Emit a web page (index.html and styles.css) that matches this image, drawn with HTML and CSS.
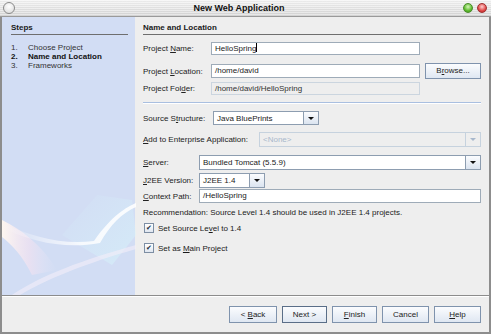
FILE: index.html
```html
<html>
  <head>
    <title>New Web Application</title>
    <meta charset="UTF-8" />
    <link rel="stylesheet" href="styles.css">
  </head>
  <body>
    <div id="window">
      <div id="titlebar">
        <span class="knob knob-menu"></span>
        <span id="title">New Web Application</span>
        <span class="knob knob-green"></span>
        <span class="knob knob-red"></span>
      </div>

      <div id="main">
        <div id="steps">
          <div class="heading">Steps</div>
          <ol>
            <li><span class="num">1.</span>Choose Project</li>
            <li class="current"><span class="num">2.</span>Name and Location</li>
            <li><span class="num">3.</span>Frameworks</li>
          </ol>
          <svg id="swoosh" width="134" height="120" viewBox="0 0 134 120">
            <defs>
              <linearGradient id="g1" x1="0" y1="0" x2="1" y2="0">
                <stop offset="0" stop-color="#fff8f0" stop-opacity="0.95" />
                <stop offset="0.5" stop-color="#f6e2f0" stop-opacity="0.6" />
                <stop offset="1" stop-color="#e8e8f8" stop-opacity="0" />
              </linearGradient>
              <linearGradient id="g2" x1="0" y1="0" x2="1" y2="0">
                <stop offset="0" stop-color="#ffffff" stop-opacity="0" />
                <stop offset="0.6" stop-color="#ffffff" stop-opacity="0.8" />
                <stop offset="1" stop-color="#ffffff" stop-opacity="0.9" />
              </linearGradient>
              <linearGradient id="g3" x1="0" y1="0" x2="1" y2="1">
                <stop offset="0" stop-color="#d8f4fb" stop-opacity="0" />
                <stop offset="1" stop-color="#d6f6fb" stop-opacity="0.9" />
              </linearGradient>
            </defs>
            <path d="M60 60 L95 20 L130 25 L134 60 L110 90 Z" fill="url(#g3)" opacity="0.6" />
            <path d="M0 45 C20 55 40 70 55 95 L30 100 C20 80 10 70 0 62 Z" fill="url(#g1)" />
            <path d="M0 48 C30 62 60 70 92 66 C110 40 125 32 134 28 L134 32 C120 38 108 50 98 68 C65 74 30 68 0 52 Z" fill="url(#g2)" />
            <path d="M10 120 C40 100 80 85 134 70 L134 74 C85 88 45 104 18 120 Z" fill="#f4eef8" opacity="0.6" />
          </svg>
        </div>

        <div id="panel">
          <div class="heading">Name and Location</div>

          <div class="row r-name">
            <label class="lbl w68">Project <u>N</u>ame:</label>
            <div class="field wide">HelloSpring<span class="caret"></span></div>
          </div>
          <div class="row r-loc">
            <label class="lbl w68">Project <u>L</u>ocation:</label>
            <div class="field wide">/home/david</div>
            <div class="btn browse">B<u>r</u>owse...</div>
          </div>
          <div class="row r-folder">
            <label class="lbl w68">Project Fol<u>d</u>er:</label>
            <div class="field wide disabled">/home/david/HelloSpring</div>
          </div>

          <div class="separator"></div>

          <div class="row r-src">
            <label class="lbl w70">Source S<u>t</u>ructure:</label>
            <div class="combo src">
              <span class="value">Java BluePrints</span><span class="arrow"></span>
            </div>
          </div>
          <div class="row r-ent">
            <label class="lbl w116"><u>A</u>dd to Enterprise Application:</label>
            <div class="combo grow disabled">
              <span class="value">&lt;None&gt;</span><span class="arrow"></span>
            </div>
          </div>
          <div class="row r-server">
            <label class="lbl w56"><u>S</u>erver:</label>
            <div class="combo grow">
              <span class="value">Bundled Tomcat (5.5.9)</span><span class="arrow"></span>
            </div>
          </div>
          <div class="row r-j2ee">
            <label class="lbl w56"><u>J</u>2EE Version:</label>
            <div class="combo j2ee">
              <span class="value">J2EE 1.4</span><span class="arrow"></span>
            </div>
          </div>
          <div class="row r-ctx">
            <label class="lbl w56"><u>C</u>ontext Path:</label>
            <div class="field grow">/HelloSpring</div>
          </div>

          <div class="note">Recommendation: Source Level 1.4 should be used in J2EE 1.4 projects.</div>

          <div class="check c1"><span class="box">&#10004;</span><span>Set Source Le<u>v</u>el to 1.4</span></div>
          <div class="check c2"><span class="box">&#10004;</span><span>Set as <u>M</u>ain Project</span></div>
        </div>
      </div>

      <div id="buttons">
        <div class="btn b48">&lt; <u>B</u>ack</div>
        <div class="btn b45 default">Next &gt;</div>
        <div class="btn b45"><u>F</u>inish</div>
        <div class="btn b47">Cancel</div>
        <div class="btn b47"><u>H</u>elp</div>
      </div>
    </div>
  </body>
</html>
```

FILE: styles.css
```css
body {
  margin: 0;
  font-family: "Liberation Sans", Arial, sans-serif;
  font-size: 8px;
  color: #1a1a1a;
  background-color: #eeeeee;
}

u {
  text-decoration: underline;
  text-underline-offset: 1px;
}

#window {
  width: 491px;
  height: 334px;
  box-sizing: border-box;
  border-left: 2px solid #8d8d8d;
  border-right: 2px solid #8d8d8d;
  border-bottom: 2px solid #8d8d8d;
  background-color: #eeeeee;
  display: flex;
  flex-direction: column;
}

#titlebar {
  height: 17px;
  margin: 0 -2px;
  box-sizing: border-box;
  border-bottom: 1px solid #9a9a9a;
  background: repeating-linear-gradient(to bottom, rgba(255,255,255,0.35) 0 1px, rgba(0,0,0,0.03) 1px 2px),
    linear-gradient(to bottom, #f4f4f4, #d9d9d9);
  display: flex;
  align-items: center;
  padding: 0 4px 0 3px;
}

#title {
  flex: 1;
  text-align: center;
  font-weight: bold;
  font-size: 9px;
  color: #111;
}

.knob {
  width: 10px;
  height: 10px;
  border-radius: 50%;
  box-sizing: border-box;
}

.knob-menu {
  width: 12px;
  height: 12px;
  border: 1.5px solid #8a8a8a;
  background: radial-gradient(circle at 50% 35%, #ffffff, #d8d8d8);
}

.knob-green {
  border: 1px solid #4a8a2a;
  background: radial-gradient(circle at 50% 35%, #d6f5b8, #5dbb2e 60%, #3f8f1c);
  margin-right: 4px;
}

.knob-red {
  border: 1px solid #a03030;
  background: radial-gradient(circle at 50% 35%, #ffd0d0, #e04848 60%, #b02020);
}

#main {
  flex: 1;
  display: flex;
  border-bottom: 1px solid #8c8c8c;
}

#steps {
  width: 134px;
  box-sizing: border-box;
  background-color: #d2ddf4;
  padding: 6px 7px 0 9px;
  position: relative;
}

#swoosh {
  position: absolute;
  left: 0;
  bottom: 0;
}

.heading {
  font-weight: bold;
  line-height: 10px;
  padding-bottom: 1px;
  border-bottom: 1px solid #6e6e6e;
}

#steps ol {
  list-style: none;
  margin: 8px 0 0 0;
  padding: 0;
}

#steps li {
  line-height: 9px;
  color: #333;
}

#steps li.current {
  font-weight: bold;
  color: #111;
}

.num {
  display: inline-block;
  width: 17px;
}

#panel {
  flex: 1;
  padding: 6px 8px 0 8px;
}

.row {
  display: flex;
  align-items: center;
}

.lbl {
  flex: none;
  color: #222;
}

.w68 { width: 68px; }
.w70 { width: 70px; }
.w116 { width: 116px; }
.w56 { width: 56px; }

.field {
  box-sizing: border-box;
  height: 13px;
  line-height: 11px;
  border: 1px solid #9eabb8;
  background-color: #ffffff;
  padding: 0 3px;
  white-space: nowrap;
}

.field.wide { width: 209px; }
.grow { flex: 1; }

.field.disabled {
  background-color: #eeeeee;
  border-color: #cbd5df;
  color: #333;
}

.caret {
  display: inline-block;
  width: 1px;
  height: 9px;
  background-color: #000;
  vertical-align: -1px;
}

.r-name { margin-top: 7px; height: 13px; }
.r-loc { margin-top: 8px; height: 16px; }
.r-loc .field { height: 14px; line-height: 12px; }
.r-folder { margin-top: 3px; height: 13px; }

.separator {
  margin-top: 7px;
  height: 1px;
  background-color: #a9bfe0;
  border-bottom: 1px solid #ffffff;
}

.r-src { margin-top: 7px; height: 14px; }
.r-ent { margin-top: 7px; height: 15px; }
.r-server { margin-top: 8px; height: 15px; }
.r-j2ee { margin-top: 3px; height: 15px; }
.r-ctx { margin-top: 1px; height: 14px; }
.r-ctx .field { height: 14px; line-height: 12px; }

.btn {
  box-sizing: border-box;
  border: 1px solid #7f93ad;
  background: linear-gradient(to bottom, #fbfcfe, #dfe7f2);
  text-align: center;
  color: #222;
}

.browse {
  width: 56px;
  height: 16px;
  line-height: 14px;
  margin-left: 5px;
}

.combo {
  box-sizing: border-box;
  height: 100%;
  border: 1px solid #8d9db0;
  background-color: #ffffff;
  display: flex;
  align-items: stretch;
}

.combo .value {
  flex: 1;
  padding: 0 3px;
  display: flex;
  align-items: center;
  white-space: nowrap;
}

.combo .arrow {
  width: 14px;
  border-left: 1px solid #8d9db0;
  background: linear-gradient(to bottom, #fbfcfe, #dbe4f0);
  position: relative;
}

.combo .arrow::after {
  content: "";
  position: absolute;
  left: 4px;
  top: 5px;
  border-left: 3px solid transparent;
  border-right: 3px solid transparent;
  border-top: 3px solid #111;
}

.combo.src { width: 106px; }
.combo.j2ee { width: 66px; }

.combo.disabled {
  background-color: #eeeeee;
  border-color: #c6d2de;
  color: #a8b8cc;
}

.combo.disabled .arrow {
  border-left-color: #c6d2de;
  background: #eeeeee;
}

.combo.disabled .arrow::after {
  border-top-color: #a8b8cc;
}

.note {
  margin-top: 5px;
  line-height: 10px;
  white-space: nowrap;
}

.check {
  display: flex;
  align-items: center;
  height: 10px;
  margin-left: 1px;
}

.c1 { margin-top: 5px; }
.c2 { margin-top: 10px; }

.box {
  box-sizing: border-box;
  width: 10px;
  height: 10px;
  border: 1px solid #7d8ea3;
  background: linear-gradient(to bottom, #ffffff, #dfe6f0);
  font-size: 7px;
  line-height: 8px;
  text-align: center;
  color: #1a2a3a;
  margin-right: 4px;
}

#buttons {
  height: 35px;
  display: flex;
  justify-content: flex-end;
  align-items: center;
  gap: 5px;
  padding: 0 8px 0 0;
  border-top: 1px solid #ffffff;
}

#buttons .btn {
  height: 17px;
  line-height: 15px;
}

.b48 { width: 48px; }
.b45 { width: 45px; }
.b47 { width: 47px; }

#buttons .default {
  border-color: #5a6e88;
}
```
